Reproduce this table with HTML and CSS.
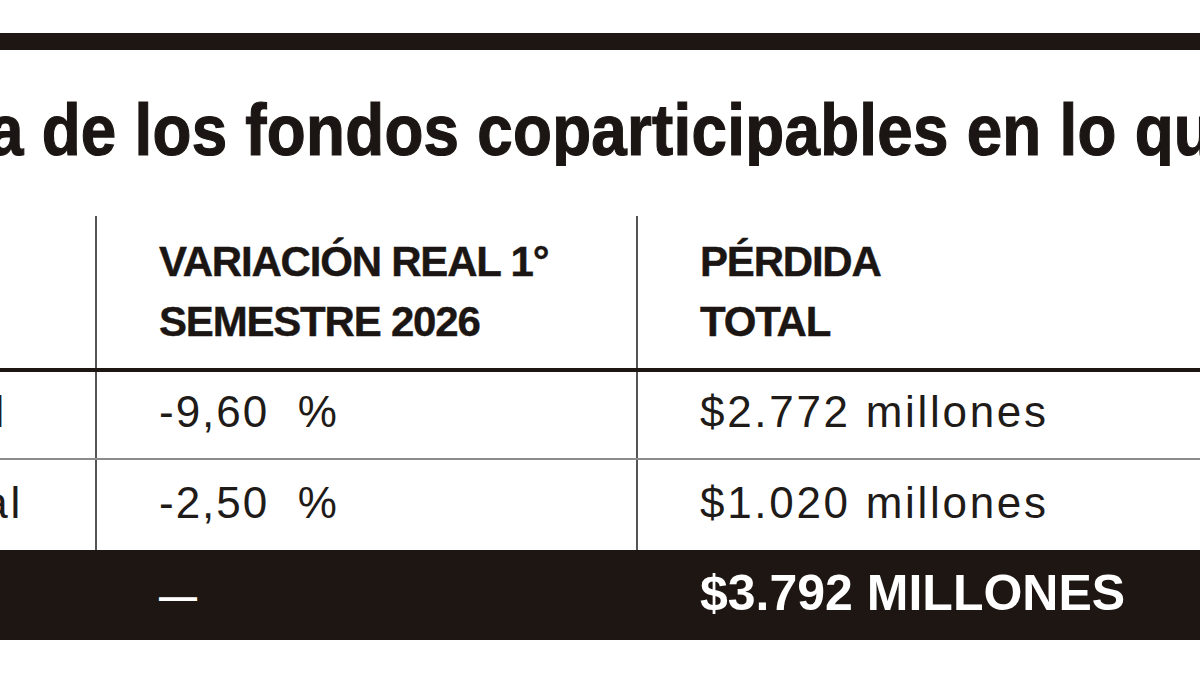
FILE: index.html
```html
<!DOCTYPE html>
<html lang="es">
<head>
<meta charset="utf-8">
<title>Caída de los fondos coparticipables</title>
<link rel="stylesheet" href="styles.css">
</head>
<body>
<div class="page">
  <div class="topbar"></div>
  <div class="title-wrap">
    <h1 class="title">a de los fondos coparticipables en lo que va del año</h1>
  </div>
  <div class="table">
    <div class="row head">
      <div class="cell c1"></div>
      <div class="cell c2">VARIACIÓN REAL 1°<br>SEMESTRE 2026</div>
      <div class="cell c3">PÉRDIDA<br>TOTAL</div>
    </div>
    <div class="row data r1">
      <div class="cell c1 cut cut1"><span>Nacional</span></div>
      <div class="cell c2">-9,60&nbsp; %</div>
      <div class="cell c3">$2.772 millones</div>
    </div>
    <div class="row data r2">
      <div class="cell c1 cut cut2"><span>Provincial</span></div>
      <div class="cell c2">-2,50&nbsp; %</div>
      <div class="cell c3">$1.020 millones</div>
    </div>
    <div class="row total">
      <div class="cell c1"></div>
      <div class="cell c2"><span class="dash">—</span></div>
      <div class="cell c3">$3.792 MILLONES</div>
    </div>
  </div>
</div>
</body>
</html>
```
FILE: styles.css
```css
html, body {
  margin: 0;
  padding: 0;
  background: #ffffff;
}
body {
  width: 1200px;
  height: 675px;
  overflow: hidden;
  color: #1b1613;
  font-family: "Liberation Sans", Arial, sans-serif;
}
.page {
  width: 1200px;
  height: 675px;
  overflow: hidden;
  padding-top: 33px;
  box-sizing: border-box;
}
.topbar {
  height: 17px;
  background: #1e1613;
}
.title-wrap {
  margin-top: 44px;
  height: 72px;
  overflow: hidden;
  white-space: nowrap;
}
.title {
  display: inline-block;
  margin: 0 0 0 -12px;
  font-size: 72px;
  line-height: 72px;
  font-weight: 700;
  letter-spacing: 0.3px;
  transform: scaleX(0.885);
  transform-origin: left center;
  color: #1b1613;
  -webkit-text-stroke: 1.2px #1b1613;
}
.table {
  margin-top: 50px;
}
.row {
  display: grid;
  grid-template-columns: 95px 541px 1fr;
}
.cell {
  white-space: nowrap;
}
.head .c2, .head .c3, .data .c2, .data .c3 {
  border-left: 2px solid #555;
}
.c2, .c3 {
  padding-left: 62px;
}
.head {
  height: 152px;
  border-bottom: 4px solid #1e1613;
}
.head .cell {
  padding-top: 16px;
  font-size: 42px;
  line-height: 60px;
  font-weight: 700;
  letter-spacing: -1.2px;
  -webkit-text-stroke: 0.4px #1b1613;
}
.data .cell {
  font-size: 44px;
  line-height: 80px;
  letter-spacing: 2.7px;
  font-weight: 400;
  color: #1f1b19;
}
.data .c2 {
  letter-spacing: 2px;
}
.r1 {
  height: 86px;
  border-bottom: 2px solid #8c8c8c;
}
.r1 .cell {
  padding-bottom: 6px;
}
.r2 {
  height: 90px;
}
.r2 .cell {
  padding-top: 3px;
}
.cut {
  display: flex;
  justify-content: flex-end;
  overflow: visible;
}
.cut1 {
  padding-right: 88px;
}
.cut2 {
  padding-right: 72px;
}
.total {
  height: 90px;
  background: #1e1613;
  color: #ffffff;
}
.total .cell {
  font-size: 50px;
  line-height: 86px;
  font-weight: 700;
  padding-bottom: 4px;
}
.total .c2, .total .c3 {
  padding-left: 64px;
}
.dash {
  font-size: 38px;
  font-weight: 700;
}
```
